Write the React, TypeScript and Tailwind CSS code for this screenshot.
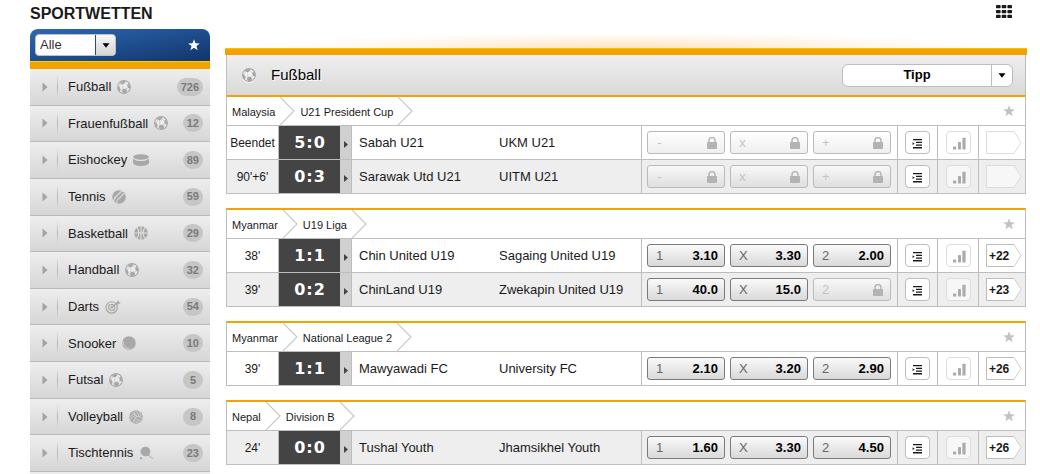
import { ReactNode, useState } from "react";

type Odd = { label: string; value?: string };

type Match = {
	time: string;
	score: [number, number];
	home: string;
	away: string;
	odds: Odd[];
	more?: number;
};

type League = { country: string; name: string; matches: Match[] };

const locked: Odd[] = [{ label: "-" }, { label: "x" }, { label: "+" }];

const threeWay = (home?: string, draw?: string, away?: string): Odd[] => [
	{ label: "1", value: home },
	{ label: "X", value: draw },
	{ label: "2", value: away },
];

const leagues: League[] = [
	{
		country: "Malaysia",
		name: "U21 President Cup",
		matches: [
			{ time: "Beendet", score: [5, 0], home: "Sabah U21", away: "UKM U21", odds: locked },
			{ time: "90'+6'", score: [0, 3], home: "Sarawak Utd U21", away: "UITM U21", odds: locked },
		],
	},
	{
		country: "Myanmar",
		name: "U19 Liga",
		matches: [
			{
				time: "38'",
				score: [1, 1],
				home: "Chin United U19",
				away: "Sagaing United U19",
				odds: threeWay("3.10", "3.30", "2.00"),
				more: 22,
			},
			{
				time: "39'",
				score: [0, 2],
				home: "ChinLand U19",
				away: "Zwekapin United U19",
				odds: threeWay("40.0", "15.0"),
				more: 23,
			},
		],
	},
	{
		country: "Myanmar",
		name: "National League 2",
		matches: [
			{
				time: "39'",
				score: [1, 1],
				home: "Mawyawadi FC",
				away: "University FC",
				odds: threeWay("2.10", "3.20", "2.90"),
				more: 26,
			},
		],
	},
	{
		country: "Nepal",
		name: "Division B",
		matches: [
			{
				time: "24'",
				score: [0, 0],
				home: "Tushal Youth",
				away: "Jhamsikhel Youth",
				odds: threeWay("1.60", "3.30", "4.50"),
				more: 26,
			},
		],
	},
];

const sports: { name: string; count: number; icon: () => ReactNode }[] = [
	{ name: "Fußball", count: 726, icon: SoccerIcon },
	{ name: "Frauenfußball", count: 12, icon: SoccerIcon },
	{ name: "Eishockey", count: 89, icon: PuckIcon },
	{ name: "Tennis", count: 59, icon: TennisIcon },
	{ name: "Basketball", count: 29, icon: BasketballIcon },
	{ name: "Handball", count: 32, icon: SoccerIcon },
	{ name: "Darts", count: 54, icon: DartsIcon },
	{ name: "Snooker", count: 10, icon: SnookerIcon },
	{ name: "Futsal", count: 5, icon: SoccerIcon },
	{ name: "Volleyball", count: 8, icon: VolleyballIcon },
	{ name: "Tischtennis", count: 23, icon: TableTennisIcon },
];

export default function App() {
	return (
		<div className="flex min-h-screen flex-col bg-white pr-[13px] pl-[30px] font-['Liberation_Sans',Arial,sans-serif] text-[#1a1a1a]">
			<header className="flex h-[29px] items-start justify-between pr-[15px]">
				<h1 className="pt-0.5 text-base leading-6 font-bold">SPORTWETTEN</h1>
				<button type="button" aria-label="Übersicht" className="pt-[5px]">
					<GridIcon />
				</button>
			</header>
			<div className="flex flex-1 gap-[15px]">
				<Sidebar />
				<main className="min-w-0 flex-1">
					<div className="h-[19px] bg-[radial-gradient(ellipse_48%_80%_at_50%_100%,#fde3bd,#fff6e8_60%,transparent)]" />
					<div className="h-[7px] border-t border-[#f5c400] bg-[#f5a200]" />
					<div className="flex flex-col gap-3.5 px-px">
						<div>
							<div className="flex h-10 items-center border-x border-[#bdbdbd] bg-linear-to-b from-[#efefef] to-[#d9d9d9] pr-3 pl-[15px]">
								<span className="w-[15px] text-[#a3a3a3] drop-shadow-[0_1px_0_#fff]">
									<SoccerIcon />
								</span>
								<h2 className="flex-1 pl-3.5 text-[15px] text-black [text-shadow:1px_1px_0_#fff]">Fußball</h2>
								<MarketSelect />
							</div>
							<LeagueTable league={leagues[0]} />
						</div>
						{leagues.slice(1).map((league) => (
							<LeagueTable key={league.name} league={league} />
						))}
					</div>
				</main>
			</div>
		</div>
	);
}

function Sidebar() {
	const [filter, setFilter] = useState("Alle");
	return (
		<aside className="flex w-[180px] shrink-0 flex-col">
			<div className="flex h-8 items-center justify-between rounded-t-lg bg-linear-to-br from-[#2f69aa] via-[#1f4f8f] to-[#12346b] pr-2.5 pl-[5px]">
				<div className="relative">
					<select
						aria-label="Sportarten filtern"
						value={filter}
						onChange={(event) => setFilter(event.target.value)}
						className="block h-[22px] w-[81px] appearance-none rounded-sm border border-[#b9c3d0] bg-white pl-1 text-[13px] leading-5 text-[#333]"
					>
						<option>Alle</option>
						<option>Live</option>
					</select>
					<span className="pointer-events-none absolute top-px right-px bottom-px flex w-5 items-center justify-center rounded-r-sm border-l border-[#1f4f8f] bg-linear-to-b from-[#f6f6f6] to-[#d5d5d5] text-black">
						<DownIcon />
					</span>
				</div>
				<button type="button" aria-label="Favoriten" className="text-white">
					<StarIcon />
				</button>
			</div>
			<div className="h-2 border-t border-[#f5d400] bg-[#f5a200]" />
			<nav className="flex-1 bg-[#ececec] pb-0.5">
				<ul className="grid h-full auto-rows-fr">
					{sports.map(({ name, count, icon: Icon }) => (
						<li key={name} className="border-b border-[#b9b9b9] bg-linear-to-b from-[#eeeeee] to-[#d6d6d6]">
							<a href="#" className="flex h-full items-center pr-[7px] pl-3">
								<svg viewBox="0 0 6 10" className="h-2.5 w-1.5" fill="#a3a3a3">
									<path d="M.5.5 5.5 5 .5 9.5z" />
								</svg>
								<span className="ml-[9px] h-6 w-px bg-linear-to-b from-transparent via-[#b5b5b5] to-transparent" />
								<span className="ml-2.5 text-[13px] text-[#1a1a1a]">{name}</span>
								<span className="ml-1.5 text-[#a8a8a8]">
									<Icon />
								</span>
								<span className="ml-auto flex h-[18px] min-w-5 items-center justify-center rounded-full bg-[#c6c6c6] px-1 text-[11px] font-bold text-[#7a7a7a]">
									{count}
								</span>
							</a>
						</li>
					))}
				</ul>
			</nav>
		</aside>
	);
}

function MarketSelect() {
	return (
		<div className="relative">
			<select
				aria-label="Wettmarkt"
				className="block h-[23px] w-[171px] appearance-none rounded-md border border-[#bdbdbd] bg-white pr-[21px] text-center text-[13px] leading-5 font-bold text-black [text-align-last:center]"
			>
				<option>Tipp</option>
			</select>
			<span className="pointer-events-none absolute top-px right-px bottom-px flex w-[21px] items-center justify-center border-l border-[#bdbdbd] text-black">
				<DownIcon />
			</span>
		</div>
	);
}

const matchOrder = leagues.flatMap((league) => league.matches);

function LeagueTable({ league }: { league: League }) {
	return (
		<table className="w-full table-fixed border-separate border-spacing-0 border-x border-t-2 border-x-[#bdbdbd] border-t-[#f5a200]">
			<colgroup>
				<col className="w-[52px]" />
				<col className="w-[61px]" />
				<col className="w-3" />
				<col className="w-[140px]" />
				<col />
				<col className="w-64" />
				<col className="w-10" />
				<col className="w-[41px]" />
				<col className="w-[46px]" />
			</colgroup>
			<thead>
				<tr>
					<th colSpan={9} className="border-b border-[#bdbdbd] p-0 font-normal">
						<div className="flex h-7 items-center gap-[5px] pr-2.5 pl-[5px] text-[11px]">
							<span className="pt-0.5">{league.country}</span>
							<Crumb />
							<span className="pt-0.5">{league.name}</span>
							<Crumb />
							<button type="button" aria-label={`${league.name} merken`} className="ml-auto text-[#c2c2c2]">
								<StarIcon />
							</button>
						</div>
					</th>
				</tr>
			</thead>
			<tbody>
				{league.matches.map((match) => (
					<MatchRow key={match.home} match={match} shaded={matchOrder.indexOf(match) % 2 === 1} />
				))}
			</tbody>
		</table>
	);
}

function MatchRow({ match, shaded }: { match: Match; shaded: boolean }) {
	const cell = "h-[34px] border-b border-[#bdbdbd] p-0";
	return (
		<tr className={shaded ? "bg-[#eeeeee]" : "bg-white"}>
			<td className={`${cell} border-r text-center text-xs`}>{match.time}</td>
			<td className={`${cell} bg-[#444444]`}>
				<div className="flex items-center justify-center gap-px font-['DejaVu_Sans',Verdana,sans-serif] text-base font-bold text-white">
					<span>{match.score[0]}</span>
					<span>:</span>
					<span>{match.score[1]}</span>
				</div>
			</td>
			<td className={`${cell} border-r bg-[#d0d0d0]`}>
				<svg viewBox="0 0 4 7" className="mx-auto mt-1 h-[7px] w-1" fill="#444">
					<path d="M0 0 4 3.5 0 7z" />
				</svg>
			</td>
			<td className={`${cell} pl-[7px] text-[13px] whitespace-nowrap`}>{match.home}</td>
			<td className={`${cell} border-r pl-[7px] text-[13px] whitespace-nowrap`}>{match.away}</td>
			<td className={`${cell} border-r`}>
				<div className="flex gap-[5px] pl-[5px]">
					{match.odds.map((odd) => (
						<OddButton key={odd.label} {...odd} />
					))}
				</div>
			</td>
			<td className={`${cell} border-r`}>
				<button
					type="button"
					aria-label="Alle Wetten"
					className="ml-[7px] flex h-[23px] w-[25px] items-center justify-center rounded-sm border border-[#bdbdbd] bg-white pt-0.5"
				>
					<ListIcon />
				</button>
			</td>
			<td className={`${cell} border-r`}>
				<button
					type="button"
					aria-label="Statistik"
					className="ml-2 flex h-[23px] w-[25px] items-center justify-center rounded-sm border border-[#dcdcdc] bg-white/50 pt-0.5 pl-0.5"
				>
					<BarsIcon />
				</button>
			</td>
			<td className={cell}>
				<MoreButton more={match.more} />
			</td>
		</tr>
	);
}

function OddButton({ label, value }: Odd) {
	if (!value) {
		return (
			<button
				type="button"
				disabled
				className="flex h-[23px] w-[78px] items-center justify-between rounded-[3px] border border-[#bababa] bg-linear-to-b from-white/60 to-black/5 pr-[7px] pl-2 text-[13px] text-[#c4c4c4]"
			>
				<span className="min-w-[7px] text-center">{label}</span>
				<LockIcon />
			</button>
		);
	}
	return (
		<button
			type="button"
			className="flex h-[23px] w-[78px] items-center justify-between rounded-[3px] border border-[#7a7a7a] bg-linear-to-b from-[#fafafa] to-[#d9d9d9] pr-1.5 pl-2 text-[13px]"
		>
			<span className="text-[#666]">{label}</span>
			<span className="font-bold text-black">{value}</span>
		</button>
	);
}

function MoreButton({ more }: { more?: number }) {
	return (
		<button
			type="button"
			disabled={!more}
			aria-label="Weitere Wetten"
			className="relative ml-[7px] flex h-[23px] w-9 items-center pl-[3px] text-xs font-bold text-[#1a1a1a]"
		>
			<svg viewBox="0 0 36 23" className="absolute inset-0 h-[23px] w-9" fill="none">
				<path d="M28 .5 35 11.5 28 22.5H.5V.5z" fill="#fff" fillOpacity={more ? 1 : 0.5} />
				<path d="M28 .5H.5v22H28" stroke={more ? "#bdbdbd" : "#dcdcdc"} />
				<path d="M28 .5 35 11.5 28 22.5" stroke={more ? "#cfcfcf" : "#dcdcdc"} />
			</svg>
			{more && <span className="relative">+{more}</span>}
		</button>
	);
}

function Crumb() {
	return (
		<svg viewBox="0 0 15 28" className="h-7 w-[15px]" fill="none" stroke="#c8c8c8" strokeWidth="1.2">
			<path d="M0 0 14 14 0 28" />
		</svg>
	);
}

function GridIcon() {
	return (
		<svg viewBox="0 0 16 13" className="h-[13px] w-4" fill="#1a1a1a">
			{[0, 4.9, 9.8].map((y) =>
				[0, 5.7, 11.4].map((x) => <rect key={`${x}-${y}`} x={x} y={y} width="4.6" height="3.3" rx="0.8" />),
			)}
		</svg>
	);
}

function DownIcon() {
	return (
		<svg viewBox="0 0 8 5" className="mt-px h-[5px] w-2" fill="currentColor">
			<path d="M.5.3h7L4 4.7z" />
		</svg>
	);
}

function StarIcon() {
	return (
		<svg viewBox="0 0 24 24" className="h-3 w-3" fill="currentColor">
			<path d="M12 .3l3 8.1 8.700.4-6.800 5.300 2.400 8.400-7.300-4.800-7.300 4.800 2.400-8.400L.3 8.800l8.700-.4z" />
		</svg>
	);
}

function LockIcon() {
	return (
		<svg viewBox="0 0 10 12" className="h-3 w-2.5" fill="#b3b3b3">
			<rect y="5" width="10" height="7" rx="0.7" />
			<path d="M2 6V3.6a3 3 0 0 1 6 0V6" fill="none" stroke="#b3b3b3" strokeWidth="1.4" />
		</svg>
	);
}

function ListIcon() {
	return (
		<svg viewBox="0 0 11 10" className="h-2.5 w-[11px]" fill="#1a1a1a">
			<path d="M1 0h9v1.300H1zM4 2.700h6V4H4zM4 5.400h6v1.300H4zM1 8.100h9v1.300H1zM.6 3.300 2.600 4.700.6 6.100z" />
		</svg>
	);
}

function BarsIcon() {
	return (
		<svg viewBox="0 0 13 13" className="h-[13px] w-[13px]" fill="#ababab">
			<rect x="0" y="9.5" width="3.2" height="3" rx="0.6" />
			<rect x="5" y="5" width="3" height="7.5" rx="0.4" />
			<rect x="9.4" y="0.8" width="3.2" height="11.7" rx="0.4" />
		</svg>
	);
}

function SoccerIcon() {
	return (
		<svg viewBox="0 0 16 16" className="h-3.5 w-3.5" fill="currentColor">
			<circle cx="8" cy="8" r="7.3" fill="#ffffff" fillOpacity="0.35" stroke="currentColor" strokeWidth="1.2" />
			<path d="M3.800 2.200 8.500.9 9.400 2.900 6.700 5 3.900 4.400zM13.200 3.600l2.100 3.600-.2 2.600-2.600-.6-.9-3.200zM.8 7l2 .6 1.300 3-1.300 2.300L1 10.500zM6.500 10.400l3.600-.5 1.700 2.300-1.500 2.700-3 .2-1.700-2.200z" />
			<path
				d="M9.400 2.900l2.200 3.100M3.900 4.400 2.800 7.600M6.700 5l-.2 5.400M12.500 9.200l-2.400.7M4.100 10.600l1.500 2.300"
				fill="none"
				stroke="currentColor"
				strokeWidth="0.500"
			/>
		</svg>
	);
}

function PuckIcon() {
	return (
		<svg viewBox="0 0 16 12" className="h-3 w-4" fill="currentColor">
			<path d="M0 4.5c2.4 3.4 13.6 3.4 16 0V9c-1.6 4-14.4 4-16 0z" />
			<ellipse cx="8" cy="3" rx="7.8" ry="2.8" />
		</svg>
	);
}

function TennisIcon() {
	return (
		<svg viewBox="0 0 16 16" className="h-3.5 w-3.5" fill="currentColor">
			<circle cx="8" cy="8" r="7.8" />
			<path
				d="M2.2 13.4C1.5 8.5 5 7.8 7 5.2 8.5 3.3 9.5 1.6 12.5 1.5M5.5 15c-.6-5 2.5-5 4.8-7.5C12 5.6 12.6 4 14.5 3.800"
				fill="none"
				stroke="#e2e2e2"
				strokeWidth="1.2"
			/>
		</svg>
	);
}

function BasketballIcon() {
	return (
		<svg viewBox="0 0 16 16" className="h-3.5 w-3.5" fill="currentColor">
			<circle cx="8" cy="8" r="7.8" />
			<path
				d="M8 0v16M0 8h16M3 1.5c3.5 3.5 3.5 9.5 0 13M13 1.5c-3.5 3.5-3.5 9.5 0 13"
				fill="none"
				stroke="#e2e2e2"
				strokeWidth="1.2"
			/>
		</svg>
	);
}

function DartsIcon() {
	return (
		<svg viewBox="0 0 18 16" className="h-3.5 w-4" fill="none" stroke="currentColor">
			<circle cx="7.5" cy="8.5" r="6.5" strokeWidth="1.4" />
			<circle cx="7.5" cy="8.5" r="3.5" strokeWidth="1.4" />
			<circle cx="7.5" cy="8.5" r="1" fill="currentColor" />
			<path d="M8 8l6.5-5" strokeWidth="1.4" />
			<path d="M12.5 3.5 15 .8l.4 1.8 2 .4-3 2.2z" fill="currentColor" strokeWidth="0.6" />
		</svg>
	);
}

function SnookerIcon() {
	return (
		<svg viewBox="0 0 16 16" className="h-3.5 w-3.5" fill="currentColor">
			<circle cx="8" cy="8" r="7.8" />
			<path d="M1.8 6.5c-.6 4 2.4 8 7 8" fill="none" stroke="#dedede" strokeWidth="0.9" />
		</svg>
	);
}

function VolleyballIcon() {
	return (
		<svg viewBox="0 0 16 16" className="h-3.5 w-3.5" fill="currentColor">
			<circle cx="8" cy="8" r="7.8" />
			<path
				d="M8.5 8C8.5 5 6.5 2.5 3 2M8.5 8c2.8-1 5.5-.5 7 2.5M8.5 8c-2.5 1.5-3.8 4-3 7.5M11 7.4c0-3-1.5-5.4-4.5-7M13.5 7.5c.2-2.4-.7-4.5-2.5-6.5M7 4.800C4.5 4.5 2 6 .5 8.5M7.8 6.5C5 6.5 2.5 8.5 2 12M7 10c2 1.800 4.5 2.300 7 1.500M6 12c1.500 1.500 3.500 2.200 6 2"
				fill="none"
				stroke="#e0e0e0"
				strokeWidth="0.9"
			/>
		</svg>
	);
}

function TableTennisIcon() {
	return (
		<svg viewBox="0 0 16 16" className="h-3.5 w-[15px]" fill="currentColor">
			<path d="M2.5 2.8C4.5.3 9 .2 11 2.6c1.8 2.2 1.5 5 .5 7.4L9.8 11.5C6.5 12 3.5 11.5 2 9 .8 7 1 4.6 2.5 2.8z" />
			<path d="m10.5 10.5 4.8 4" fill="none" stroke="currentColor" strokeWidth="1.6" opacity="0.6" />
			<circle cx="1.8" cy="14" r="1.3" />
		</svg>
	);
}
